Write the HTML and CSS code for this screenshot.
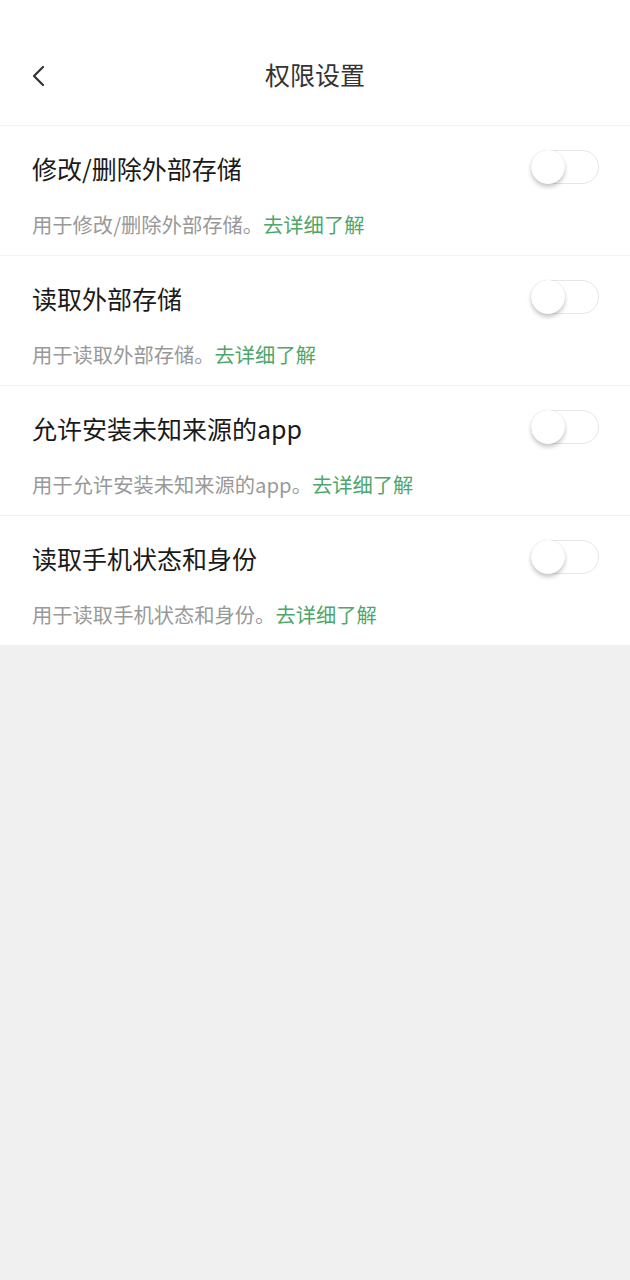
FILE: index.html
```html
<!DOCTYPE html>
<html lang="zh">
<head>
<meta charset="utf-8">
<title>权限设置</title>
<link rel="stylesheet" href="styles.css">
</head>
<body>
<div class="page">
  <header class="header">
    <div class="back">
      <svg width="16" height="22" viewBox="0 0 16 22"><path d="M12 2 L3 11 L12 20" fill="none" stroke="#333" stroke-width="2.2" stroke-linecap="round" stroke-linejoin="round"/></svg>
    </div>
    <h1 class="title">权限设置</h1>
  </header>
  <ul class="list">
    <li class="item">
      <div class="row"><span class="name">修改/删除外部存储</span><span class="toggle"><span class="knob"></span></span></div>
      <p class="desc">用于修改/删除外部存储。<span class="link">去详细了解</span></p>
    </li>
    <li class="item">
      <div class="row"><span class="name">读取外部存储</span><span class="toggle"><span class="knob"></span></span></div>
      <p class="desc">用于读取外部存储。<span class="link">去详细了解</span></p>
    </li>
    <li class="item">
      <div class="row"><span class="name">允许安装未知来源的app</span><span class="toggle"><span class="knob"></span></span></div>
      <p class="desc">用于允许安装未知来源的app。<span class="link">去详细了解</span></p>
    </li>
    <li class="item">
      <div class="row"><span class="name">读取手机状态和身份</span><span class="toggle"><span class="knob"></span></span></div>
      <p class="desc">用于读取手机状态和身份。<span class="link">去详细了解</span></p>
    </li>
  </ul>
</div>
</body>
</html>
```
FILE: styles.css
```css
html, body {
  margin: 0;
  padding: 0;
  background: #f0f0f0;
  font-family: "Noto Sans CJK SC", "Noto Sans", sans-serif;
}
.page {
  width: 630px;
  min-height: 1280px;
  background: #f0f0f0;
}
.header {
  position: relative;
  height: 125px;
  background: #fff;
  border-bottom: 1px solid #f3f3f3;
  display: flex;
  align-items: flex-start;
  justify-content: center;
}
.back {
  position: absolute;
  left: 31px;
  top: 65px;
  width: 16px;
  height: 22px;
}
.title {
  margin: 56px 0 0;
  font-size: 25px;
  line-height: 36px;
  font-weight: 400;
  color: #333;
}
.list {
  list-style: none;
  margin: 0;
  padding: 0;
  background: #fff;
}
.item {
  padding: 24px 31px 17px 32px;
  border-bottom: 1px solid #f3f3f3;
}
.item:last-child {
  border-bottom: none;
}
.row {
  display: flex;
  align-items: center;
  justify-content: space-between;
  height: 36px;
}
.name {
  font-size: 25px;
  line-height: 36px;
  color: #1a1a1a;
}
.toggle {
  position: relative;
  width: 66px;
  height: 32px;
  border: 1px solid #e6e6e6;
  border-radius: 17px;
  background: #fff;
  margin-top: -2px;
}
.knob {
  position: absolute;
  left: -1px;
  top: -1px;
  width: 34px;
  height: 34px;
  border-radius: 50%;
  background: #fff;
  box-shadow: 0 3px 4px rgba(0,0,0,0.22), 0 0 1px rgba(0,0,0,0.12);
}
.desc {
  margin: 24px 0 0;
  font-size: 20.3px;
  line-height: 28px;
  color: #999;
}
.link {
  color: #4ea66a;
}
```
